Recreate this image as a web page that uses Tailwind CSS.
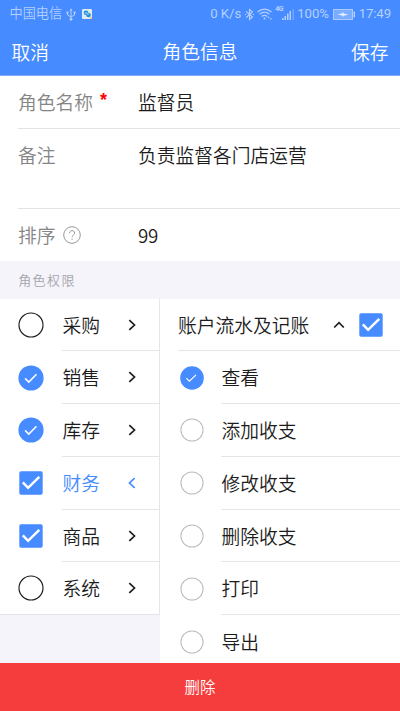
<!DOCTYPE html>
<html lang="zh-CN">
<head>
<meta charset="utf-8">
<meta name="viewport" content="width=device-width, initial-scale=1">
<title>角色信息</title>
<script src="https://cdn.jsdelivr.net/npm/@tailwindcss/browser@4"></script>
</head>
<body class="w-[400px] h-[711px] overflow-hidden bg-[#f4f4fa] text-[#1c1c1c] font-['Noto_Sans_CJK_SC',sans-serif] font-[350] text-[18.75px] leading-[28px]">
<svg class="hidden">
  <symbol id="ring" viewBox="0 0 26 26"><circle cx="13" cy="13" r="12" fill="none" stroke="currentColor" stroke-width="1.15"/></symbol>
  <symbol id="round" viewBox="0 0 26 26"><circle cx="13" cy="13" r="12.6" fill="#468bff"/><path d="M7.1 13.4l3.7 3.7 7.7-7.9" fill="none" stroke="#fff" stroke-width="1.5"/></symbol>
  <symbol id="box" viewBox="0 0 24 24"><rect x=".3" y=".3" width="23.4" height="23.4" rx="1.8" fill="#468bff"/><path d="M3.8 11.4l5.3 5.4L20.3 5.8" fill="none" stroke="#fff" stroke-width="2.5"/></symbol>
  <symbol id="chev" viewBox="0 0 8 12"><path d="M1.3 1.2L6.5 6l-5.2 4.8" fill="none" stroke="currentColor" stroke-width="1.7"/></symbol>
</svg>
<div class="flex h-full flex-col">
  <header class="h-[76px] shrink-0 border-b border-[#7dadff] bg-[#468bff] text-white">
    <div class="flex h-7 items-center pl-[9.5px] pr-[9px] text-[13.2px] leading-none text-[#b5d0ff] font-[Roboto,'Noto_Sans_CJK_SC',sans-serif]">
      <span>中国电信</span>
      <svg class="ml-1 h-[13px] w-[10px]" viewBox="0 0 10 13" fill="none" stroke="currentColor"><path d="M5 1v10M1.5 4v3L5 9l3.5-2V4"/><path d="M3.5 2.5L5 .5l1.5 2z" fill="currentColor" stroke="none"/><circle cx="5" cy="11.3" r="1.4" fill="currentColor" stroke="none"/><path d="M.5 3.5h2v2h-2zM7.5 3.5h2v2h-2z" fill="currentColor" stroke="none"/></svg>
      <svg class="ml-[6px] h-[10px] w-[10px]" viewBox="0 0 10 10"><rect width="10" height="10" rx="1" fill="#dcecf5"/><circle cx="4" cy="3.8" r="2.3" fill="#258fd7"/><circle cx="6.5" cy="6" r="2.3" fill="#258fd7"/><path d="M3.2 4.5l1-1 1.8 2 .9-.9" fill="none" stroke="#fff" stroke-width=".9"/><path d="M8 8h2v2H8z" fill="#e4c795"/></svg>
      <span class="ml-auto font-normal">0 K/s</span>
      <svg class="ml-[4px] h-[13px] w-[9px]" viewBox="0 0 9 12" fill="none" stroke="currentColor" stroke-width="1.1"><path d="M1.2 3l6.3 5.5L4.5 11V1l3 2.5L1.2 9M0 6h1.2M7.8 6H9"/></svg>
      <svg class="ml-[3px] h-3 w-[15px]" viewBox="0 0 15 12" fill="none" stroke="currentColor" stroke-width="1.3"><path d="M.5 4Q7.5-1.8 14.5 4M2.7 6.3Q7.5 2 12.3 6.3M4.8 8.6q2.7-2.4 5.4 0"/><circle cx="7.5" cy="10.5" r="1" fill="currentColor" stroke="none"/><path d="M10.8 9.3h1.6M13 10.8h1.6" /></svg>
      <span class="ml-[3px] w-[7px] self-start pt-[6px] text-[7px] font-bold tracking-[-.7px]">4G</span>
      <svg class="h-[11px] w-[12px]" viewBox="0 0 12 11" fill="currentColor"><path d="M0 9h1.5v2H0zM2.5 7H4v4H2.5zM5 4.5h1.5V11H5zM7.5 2H9v9H7.5z"/><path d="M10.5 0H12v11h-1.5z" opacity=".4"/></svg>
      <span class="ml-[3px] font-normal tracking-[-.15px]">100%</span>
      <svg class="ml-[4px] h-[11px] w-[22px]" viewBox="0 0 22 11"><rect x=".5" y=".5" width="19" height="10" fill="#7aacff" stroke="#a9c9ff"/><path d="M4.5 5.5l4.5-1.3 1-1.2.8 1.5 4.7 1-4.5 1.2-1 1.3-.8-1.6z" fill="#e2edff"/><path d="M20.5 2.5H22v6h-1.5z" fill="#b5d0ff"/></svg>
      <span class="ml-[4px] font-normal tracking-[-.1px]">17:49</span>
    </div>
    <div class="grid h-12 grid-cols-3 items-center pl-[11.6px] pr-[11.4px]">
      <span>取消</span><h1 class="pb-[2px] text-center">角色信息</h1><span class="text-right">保存</span>
    </div>
  </header>
  <section class="shrink-0 bg-white pl-[18px] text-[#858585]">
    <div class="flex h-[53px] items-center border-b border-[#e3e3e3]"><span class="w-[120px]">角色名称<span class="ml-[7px] inline-block align-top text-[#f00] font-['Liberation_Sans',sans-serif] text-[18px] font-bold leading-[25px]">*</span></span><span class="text-[#1c1c1c]">监督员</span></div>
    <div class="flex h-[80px] border-b border-[#e3e3e3] pt-[12px]"><span class="w-[120px]">备注</span><span class="text-[#1c1c1c]">负责监督各门店运营</span></div>
    <div class="flex h-[52px] items-center"><span class="flex w-[120px] items-center">排序
      <svg class="ml-[7.5px] h-[18px] w-[18px] text-[#999]" viewBox="0 0 18 18" fill="none" stroke="currentColor"><circle cx="9" cy="9" r="8.3"/><path d="M6.5 7.2C6.5 3.8 11.6 3.9 11.6 7c0 2-2.5 2-2.5 4.1M9.1 12.4v1.4"/></svg></span><span class="tracking-[-.3px] text-[#1c1c1c]">99</span></div>
  </section>
  <h2 class="h-[38px] shrink-0 pl-[18.2px] text-[13px] leading-[38px] tracking-[1.4px] text-[#a5a5ab]">角色权限</h2>
  <main class="flex min-h-0 flex-1 items-start overflow-hidden">
    <nav class="w-[160px] border-r border-[#e6e6ea] bg-white">
      <div class="flex h-[52.3px] items-center pl-[18px]"><svg class="size-[26px]"><use href="#ring"/></svg><div class="ml-[18px] flex h-full flex-1 items-center border-b border-[#e5e5e8] pl-[.5px] pr-[23px]"><span class="flex-1">采购</span><svg class="h-3 w-2"><use href="#chev"/></svg></div></div>
      <div class="flex h-[52.8px] items-center pl-[18px]"><svg class="size-[26px]"><use href="#round"/></svg><div class="ml-[18px] flex h-full flex-1 items-center border-b border-[#e5e5e8] pl-[.5px] pr-[23px]"><span class="flex-1">销售</span><svg class="h-3 w-2"><use href="#chev"/></svg></div></div>
      <div class="flex h-[52.8px] items-center pl-[18px]"><svg class="size-[26px]"><use href="#round"/></svg><div class="ml-[18px] flex h-full flex-1 items-center border-b border-[#e5e5e8] pl-[.5px] pr-[23px]"><span class="flex-1">库存</span><svg class="h-3 w-2"><use href="#chev"/></svg></div></div>
      <div class="flex h-[52.8px] items-center pl-[19.3px] text-[#468bff]"><svg class="size-6"><use href="#box"/></svg><div class="ml-[18.7px] flex h-full flex-1 items-center border-b border-[#e5e5e8] pl-[.5px] pr-[23px]"><span class="flex-1">财务</span><svg class="h-3 w-2 rotate-180"><use href="#chev"/></svg></div></div>
      <div class="flex h-[52.8px] items-center pl-[19.3px]"><svg class="size-6"><use href="#box"/></svg><div class="ml-[18.7px] flex h-full flex-1 items-center border-b border-[#e5e5e8] pl-[.5px] pr-[23px]"><span class="flex-1">商品</span><svg class="h-3 w-2"><use href="#chev"/></svg></div></div>
      <div class="flex h-[52.8px] items-center border-b border-[#e5e5e8] pl-[18px]"><svg class="size-[26px]"><use href="#ring"/></svg><div class="ml-[18px] flex h-full flex-1 items-center pl-[.5px] pr-[23px]"><span class="flex-1">系统</span><svg class="h-3 w-2"><use href="#chev"/></svg></div></div>
    </nav>
    <section class="w-[240px] bg-white pl-[18px]">
      <div class="flex h-[52.3px] items-center border-b border-[#e5e5e5]"><span>账户流水及记账</span><svg class="ml-[23.7px] h-[8px] w-3" viewBox="0 0 12 8"><path d="M1.2 6.5L6 1.7l4.8 4.8" fill="none" stroke="currentColor" stroke-width="1.7"/></svg><svg class="ml-[14px] size-6"><use href="#box"/></svg></div>
      <div class="flex h-[52.8px] items-center pl-[2px]"><svg class="size-6" viewBox="0 0 24 24"><circle cx="12" cy="12" r="11.8" fill="#468bff"/><path d="M6.3 12.2l3.1 3 6.6-6.4" fill="none" stroke="#fff" stroke-width="1.1"/></svg><div class="ml-[17px] flex h-full flex-1 items-center border-b border-[#e5e5e5] pl-[.4px]">查看</div></div>
      <div class="flex h-[52.8px] items-center pl-[2px]"><svg class="size-6 text-[#bdbdbf]"><use href="#ring"/></svg><div class="ml-[17px] flex h-full flex-1 items-center border-b border-[#e5e5e5] pl-[.4px]">添加收支</div></div>
      <div class="flex h-[52.8px] items-center pl-[2px]"><svg class="size-6 text-[#bdbdbf]"><use href="#ring"/></svg><div class="ml-[17px] flex h-full flex-1 items-center border-b border-[#e5e5e5] pl-[.4px]">修改收支</div></div>
      <div class="flex h-[52.8px] items-center pl-[2px]"><svg class="size-6 text-[#bdbdbf]"><use href="#ring"/></svg><div class="ml-[17px] flex h-full flex-1 items-center border-b border-[#e5e5e5] pl-[.4px]">删除收支</div></div>
      <div class="flex h-[52.8px] items-center pl-[2px]"><svg class="size-6 text-[#bdbdbf]"><use href="#ring"/></svg><div class="ml-[17px] flex h-full flex-1 items-center border-b border-[#e5e5e5] pl-[.4px]">打印</div></div>
      <div class="flex h-[52.8px] items-center pl-[2px]"><svg class="size-6 text-[#bdbdbf]"><use href="#ring"/></svg><div class="ml-[17px] flex h-full flex-1 items-center pl-[.4px]">导出</div></div>
    </section>
  </main>
  <button class="h-12 shrink-0 bg-[#f63d3d] pb-[2px] text-[15.5px] text-white">删除</button>
</div>
</body>
</html>
